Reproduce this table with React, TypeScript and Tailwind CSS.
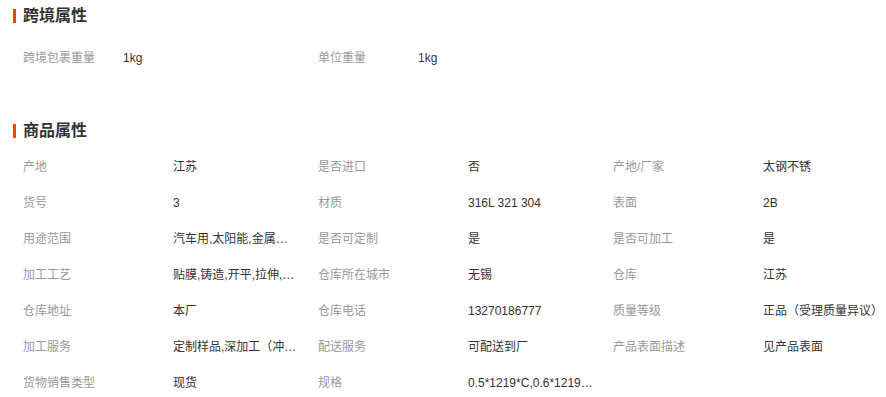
const crossBorder = [
  { label: '跨境包裹重量', value: '1kg' },
  { label: '单位重量', value: '1kg' },
];

const attrs = [
  { label: '产地', value: '江苏' },
  { label: '是否进口', value: '否' },
  { label: '产地/厂家', value: '太钢不锈' },
  { label: '货号', value: '3' },
  { label: '材质', value: '316L 321 304' },
  { label: '表面', value: '2B' },
  { label: '用途范围', value: '汽车用,太阳能,金属制品,建筑装饰' },
  { label: '是否可定制', value: '是' },
  { label: '是否可加工', value: '是' },
  { label: '加工工艺', value: '贴膜,铸造,开平,拉伸,加工' },
  { label: '仓库所在城市', value: '无锡' },
  { label: '仓库', value: '江苏' },
  { label: '仓库地址', value: '本厂' },
  { label: '仓库电话', value: '13270186777' },
  { label: '质量等级', value: '正品（受理质量异议）' },
  { label: '加工服务', value: '定制样品,深加工（冲压、折弯）' },
  { label: '配送服务', value: '可配送到厂' },
  { label: '产品表面描述', value: '见产品表面' },
  { label: '货物销售类型', value: '现货' },
  { label: '规格', value: '0.5*1219*C,0.6*1219*C,0.8*1219*C' },
];

function SectionTitle({ title }: { title: string }) {
  return (
    <div className="flex h-[30px] items-center pl-[13px]">
      <span className="mr-[7px] h-[14px] w-[3px] bg-[#ff4400]" />
      <span className="text-[16px] font-bold text-[#333]">{title}</span>
    </div>
  );
}

export default function App() {
  return (
    <div
      className="h-[397px] w-[886px] overflow-hidden bg-white pt-[1px] text-[12px]"
      style={{ fontFamily: '"Liberation Sans", "Noto Sans CJK SC", sans-serif' }}
    >
      <SectionTitle title="跨境属性" />
      <div className="mt-[9px] flex pl-[23px]">
        {crossBorder.map((item) => (
          <div key={item.label} className="flex h-[36px] w-[295px] items-center">
            <span className="w-[100px] text-[#999]">{item.label}</span>
            <span className="text-[#333]">{item.value}</span>
          </div>
        ))}
      </div>

      <div className="mt-[40px]">
        <SectionTitle title="商品属性" />
      </div>
      <div className="mt-[3px] grid grid-cols-[295px_295px_1fr] pl-[23px]">
        {attrs.map((item) => (
          <div key={item.label} className="flex h-[36px] min-w-0 items-center">
            <span className="w-[150px] shrink-0 text-[#999]">{item.label}</span>
            <span className="w-[125px] shrink-0 truncate text-[#333]">{item.value}</span>
          </div>
        ))}
      </div>
    </div>
  );
}
